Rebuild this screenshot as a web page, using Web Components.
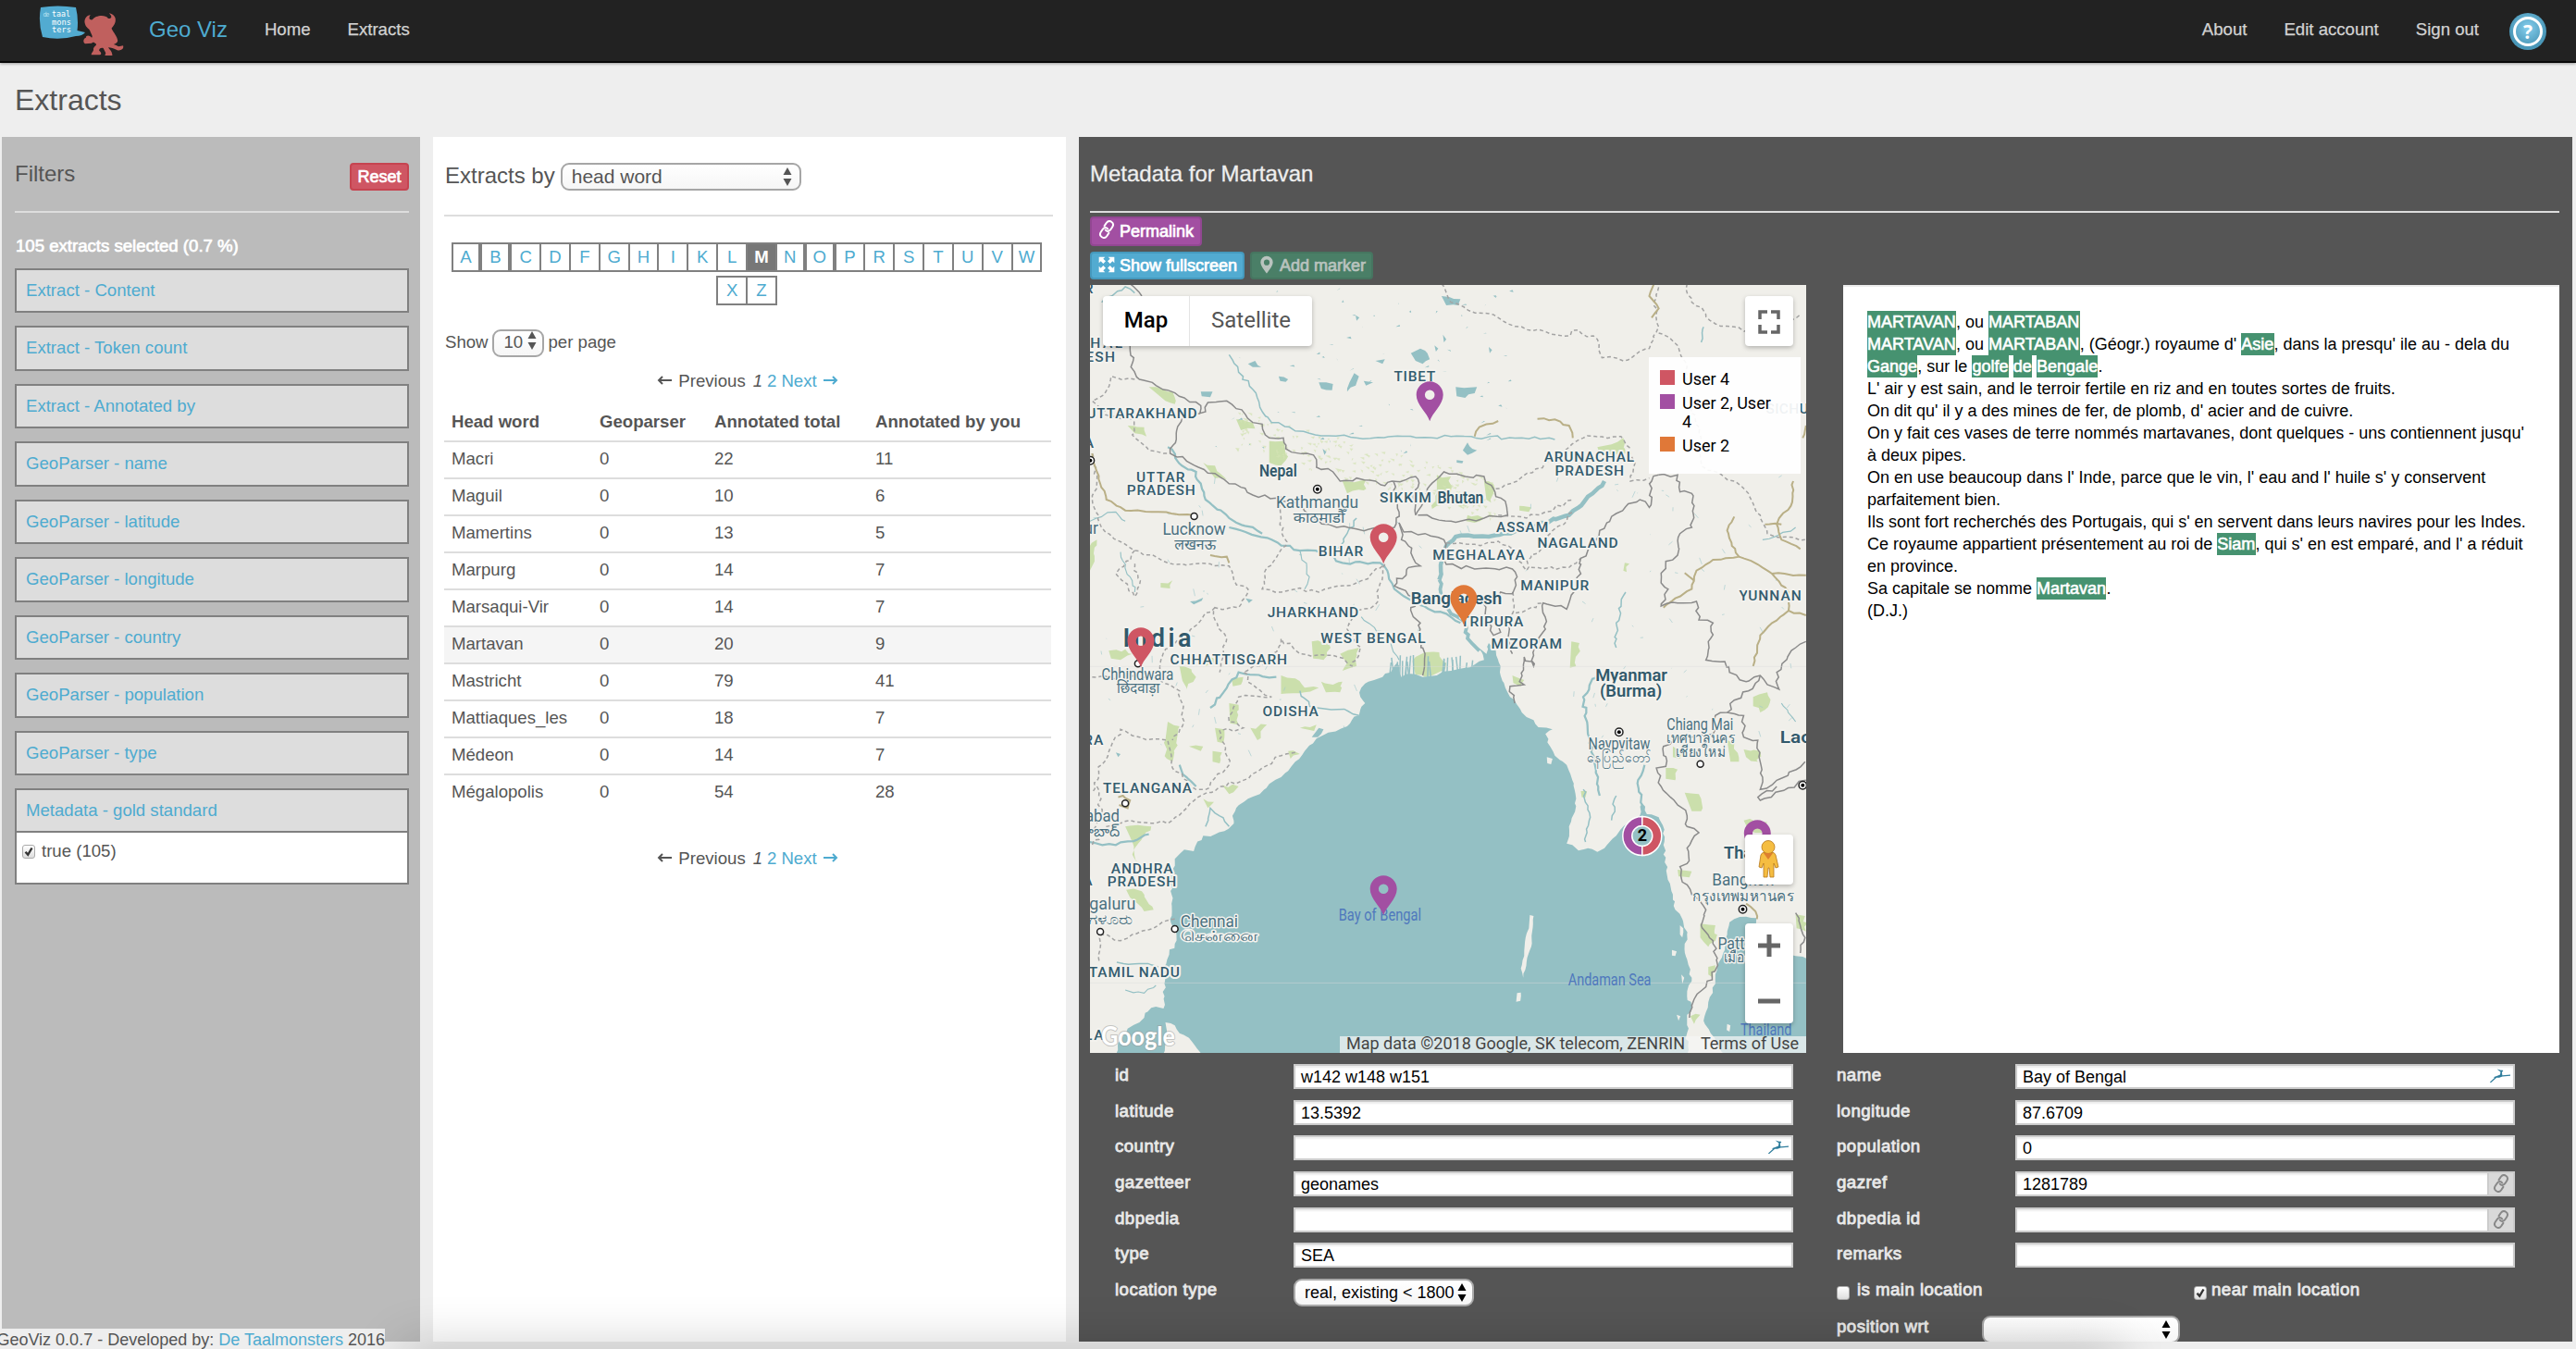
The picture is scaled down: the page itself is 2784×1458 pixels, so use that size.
<!DOCTYPE html>
<html lang="en">
<head>
<meta charset="utf-8">
<title>Geo Viz</title>
<style>
html,body{margin:0;padding:0}
body{width:2784px;height:1458px;overflow:hidden;background:#eee;color:#555;font:18.6px "Liberation Sans",Arial,sans-serif}
</style>
</head>
<body>
<geo-app></geo-app>
<script>
const RESET = `*{box-sizing:border-box} a{color:#4eabd0;text-decoration:none} .fat{-webkit-text-stroke:.7px currentColor}`;
function define(name, html, after) {
  const tpl = document.createElement('template');
  customElements.define(name, class extends HTMLElement {
    connectedCallback() {
      if (this.shadowRoot) return;
      tpl.innerHTML = `<style>${RESET}</style>` + (typeof html === 'function' ? html(this) : html);
      this.attachShadow({mode: 'open'}).appendChild(tpl.content.cloneNode(true));
      if (after) after(this);
    }
  });
}

/* ---------- small parts ---------- */
const ICONS = {
  link: `<g fill="none" stroke="currentColor" stroke-width="2.4" stroke-linecap="round" stroke-linejoin="round" transform="rotate(-4 12 12)"><path d="M10.500 12.500c1.500 2.500 4.500 2.500 6.300.4l2.700-3.400c2-2.600 1.600-5.200-.6-6.900-2.200-1.700-4.900-1.200-6.700 1l-2.700 3.600"/><path d="M13.500 11.500c-1.500-2.500-4.500-2.500-6.300-.4l-2.700 3.400c-2 2.600-1.600 5.200.6 6.900 2.200 1.700 4.900 1.200 6.700-1l2.700-3.600"/></g>`,
  expand: `<path fill="currentColor" d="M2 2h8L7.6 4.4l3.200 3.200-3.200 3.200-3.200-3.200L2 10zM22 2v8l-2.400-2.400-3.200 3.200-3.200-3.200 3.200-3.200L14 2zM2 22v-8l2.400 2.400 3.200-3.200 3.200 3.200-3.200 3.200L10 22zM22 22h-8l2.400-2.400-3.200-3.200 3.200-3.200 3.200 3.200L22 14z"/>`,
  pin: `<path fill="currentColor" fill-rule="evenodd" d="M12 1a8 8 0 0 0-8 8c0 5 8 14.500 8 14.500S20 14 20 9a8 8 0 0 0-8-8zm0 4.500a3.700 3.700 0 1 1 0 7.400 3.700 3.700 0 0 1 0-7.400z"/>`,
  bird: `<path fill="#2f7d9c" d="M9 2l4.500 2 1.500-.5 1 2-1.500 1 .5 5 9-.8v1.600l-9 1.200-3.500 1.500-3 .3L2 23l-1-1.200L6.500 15l-1.500-.5 5-2.500 2.500-1.500.5-4z"/>`
};
define('ui-icon', el => `<style>:host{display:inline-flex;flex:none;width:20px;height:20px}svg{width:100%;height:100%}</style>
<svg viewBox="0 0 24 24" preserveAspectRatio="none">${ICONS[el.getAttribute('name')]}</svg>`);

define('ui-button', `<style>
:host{display:inline-flex;align-items:center;height:30px;padding:0 7px 0 6px;gap:4px;border:2px solid;border-radius:4px;font-size:18px;color:#fff;line-height:26px;white-space:nowrap}
:host([kind=reset]){background:#cf5663;border-color:#c64450;width:64px;padding:0;justify-content:center;gap:0}
:host([kind=link]){background:#a24fa2;border-color:#924792;height:32px}
:host([kind=link]) ::slotted([slot=icon]){margin-bottom:5px}
:host([kind=full]){background:#52abd1;border-color:#4599bd}
:host([kind=full]) ::slotted([slot=icon]),:host([kind=add]) ::slotted([slot=icon]){margin-bottom:2px}
:host([kind=add]){background:#4a7f67;border-color:#467560;color:#b9c3be}
</style><slot name="icon"></slot><span class="fat"><slot></slot></span>`);

define('ui-select', el => `<style>
:host{display:inline-flex;align-items:center;justify-content:space-between;height:30px;border:2px solid #a6a6a6;border-radius:9px;background:linear-gradient(#fff,#f6f6f6);padding:0 8px 0 10px;line-height:26px;white-space:pre}
svg{width:10px;height:20px;flex:none}
</style><span><slot></slot></span><svg viewBox="0 0 10 20" fill="currentColor"><path d="M5 0l4.500 8h-9zM5 20l4.500-8h-9z"/></svg>`);

define('ui-check', el => `<style>
:host{display:inline-block;flex:none;width:14px;height:15px;border:1px solid #aaa;border-radius:3px;background:linear-gradient(#fff,#ddd)}
svg{display:block;width:12px;height:13px}</style>
${el.hasAttribute('checked') ? `<svg viewBox="0 0 12 13"><path d="M2.500 6.800l2.700 3 4.300-7.300" fill="none" stroke="#333" stroke-width="2.400"/></svg>` : ''}`);

define('ui-rule', `<style>:host{display:block;height:2px;background:#ddd;flex:none}</style>`);

/* ---------- navigation bar ---------- */
define('nav-bar', `<style>
:host{display:flex;height:68px;background:#222;border-bottom:2px solid #080808;box-shadow:0 1px 3px rgba(0,0,0,.35);padding:0 32px 0 42px;line-height:64px;color:#d2d2d2;position:relative}
.logo{width:94px;height:56px;margin:6px -2px 0 0}
.brand{font-size:24px;color:#4eabd0;margin-left:27px}
span{margin-left:40px;-webkit-text-stroke:.25px}
.sp{flex:1}
.help{width:40px;height:40px;margin:14px 0 0 33px}
</style>
<svg class="logo" viewBox="0 0 94 56"><path d="M2 2Q20-1 40 2Q43 14 41.500 27L50 29Q47 33 40 33Q22 38 4 34Q-1 18 2 2z" fill="#52abd1"/>
<g fill="#fff" font-family="DejaVu Sans Mono" font-size="9.500"><text x="4.500" y="11.500" font-size="7" fill="#b5e0f0" textLength="7">de</text><text x="14" y="11.500" textLength="20" lengthAdjust="spacingAndGlyphs">taal</text><text x="14" y="20.500" textLength="21" lengthAdjust="spacingAndGlyphs">mons</text><text x="14" y="29" textLength="21" lengthAdjust="spacingAndGlyphs">ters</text></g>
<path transform="translate(-42 -6) scale(.4464 .3333)" fill="#c0605e" d="M206 78C202 62 210 50 219 48C214 58 216 66 224 64C230 50 255 46 262 60C270 62 273 54 264 43C276 46 282 58 279 72C277 82 272 88 270 92C276 108 284 118 285 132C284 140 278 142 275 144C282 146 286 152 290 150L298 148C301 158 292 166 284 163C276 158 268 154 262 154C266 162 272 168 272 180L254 180L256 172L250 156C244 154 240 158 240 164C246 170 246 176 242 178L221 178C221 170 228 166 226 158C228 150 236 146 232 142C228 136 224 136 222 140L206 142C200 136 202 124 208 122C208 114 216 112 222 122C226 118 220 110 218 100C216 92 208 90 206 78z"/></svg>
<a class="brand">Geo Viz</a><span>Home</span><span>Extracts</span><div class="sp"></div><span>About</span><span>Edit account</span><span>Sign out</span>
<svg class="help" viewBox="0 0 40 40"><defs><radialGradient id="g" cx=".5" cy=".4"><stop offset="0" stop-color="#86cfee"/><stop offset="1" stop-color="#4a97b8"/></radialGradient></defs><circle cx="20" cy="20" r="20" fill="url(#g)"/><circle cx="20" cy="20" r="14.500" fill="none" stroke="#fff" stroke-width="3"/><text x="20" y="27.500" text-anchor="middle" font-family="Open Sans" font-weight="700" font-size="21" fill="#fff">?</text></svg>`);

/* ---------- filters ---------- */
define('filter-item', `<style>
:host{display:block;border:2px solid #808080;flex:none}
.h{background:#ddd;height:44.450px;line-height:43.400px;padding-left:10px;color:#4eabd0}
::slotted([slot=body]){display:flex;height:56px;border-top:2px solid #808080;background:#fff;line-height:39px;padding-left:6px;gap:7px}
</style><div class="h"><slot></slot></div><slot name="body"></slot>`);
define('filter-panel', `<style>
:host{display:flex;flex-direction:column;width:452px;background:#bbb;padding:0 12px 0 14px}
header{display:flex;justify-content:space-between;height:80px;font-size:24px;line-height:80px}
ui-button{margin-top:28px}
.n{color:#fff;height:60px;padding:12px 0 0 1px;line-height:47px}
.l{display:flex;flex-direction:column;gap:14px}
ui-check{margin-top:13px}
</style><header>Filters<ui-button kind="reset">Reset</ui-button></header><ui-rule></ui-rule>
<div class="n fat">105 extracts selected (0.7 %)</div><div class="l">
${['Extract - Content','Extract - Token count','Extract - Annotated by','GeoParser - name','GeoParser - latitude','GeoParser - longitude','GeoParser - country','GeoParser - population','GeoParser - type'].map(t=>`<filter-item>${t}</filter-item>`).join('')}
<filter-item>Metadata - gold standard<div slot="body"><ui-check checked></ui-check>true (105)</div></filter-item></div>`);

/* ---------- extract list ---------- */
define('page-nav', `<style>:host{display:flex;justify-content:center;line-height:25px;height:24px}
i,a{margin-left:5px}i{margin-left:8px}svg{width:17px;height:12px}span{display:flex;align-items:center;gap:6px}a{display:flex;align-items:center;gap:6px}</style>
<span><svg viewBox="0 0 17 12"><path d="M16 6H2M6 2L2 6l4 4" fill="none" stroke="#555" stroke-width="2"/></svg>Previous</span><i>1</i><a>2</a><a>Next<svg viewBox="0 0 17 12"><path d="M1 6h14M11 2l4 4-4 4" fill="none" stroke="#4eabd0" stroke-width="2"/></svg></a>`);
define('letter-index', `<style>
:host{display:flex;flex-direction:column;align-items:center;gap:4px}
div{display:flex;padding-right:6px}
a{width:33.850px;margin-right:-2px;height:32px;border:2px solid #808080;text-align:center;line-height:27px}
a.t{width:31.850px;margin-right:0}
a.on{background:#777;color:#fff;font-weight:bold}
</style><div>${[...'ABCDFGHIKLMNOPRSTUVW'].map(c=>`<a class="${'ABNO'.includes(c)?'t':''} ${c==='M'?'on':''}">${c}</a>`).join('')}</div><div><a>X</a><a>Z</a></div>`);
define('extract-panel', `<style>
:host{display:flex;flex-direction:column;width:684px;background:#fff;padding:0 14px 0 12px}
header{display:flex;height:84px;font-size:24px;line-height:84px;padding-left:1px}
header ui-select{width:260px;margin:28px 0 0 6px;font-size:21px}
letter-index{margin-top:28px}
.show{display:flex;margin-top:26px;height:30px;line-height:28px;padding-left:1px}
.show ui-select{width:56px;margin:0 5px 0 4px;padding:0 6px 0 11px;line-height:24px;align-items:flex-start}
page-nav{margin-top:13px;margin-right:2px}
.t{display:grid;width:656px;margin:13px 0 26px}
.r{display:grid;grid-template-columns:160px 124px 174px 190px;height:40px;border-top:2px solid #ddd;line-height:35px;padding-left:8px}
.r.h{border-color:transparent;font-weight:bold}.r.on{background:#f5f5f5}
.r span{white-space:nowrap}
</style><header>Extracts by<ui-select>head word</ui-select></header><ui-rule></ui-rule>
<letter-index></letter-index>
<div class="show">Show<ui-select>10</ui-select>per page</div><page-nav></page-nav>
<div class="t">${[['Head word','Geoparser','Annotated total','Annotated by you'],['Macri',0,22,11],['Maguil',0,10,6],['Mamertins',0,13,5],['Marpurg',0,14,7],['Marsaqui-Vir',0,14,7],['Martavan',0,20,9],['Mastricht',0,79,41],['Mattiaques_les',0,18,7],['Médeon',0,14,7],['Mégalopolis',0,54,28]].map((r,i)=>`<div class="r ${i?'':'h'} ${r[0]==='Martavan'?'on':''}">${r.map(c=>`<span>${c}</span>`).join('')}</div>`).join('')}</div>
<page-nav></page-nav>`);

/* ---------- map ---------- */
/* Terrain is plotted on its own grid and scaled to the view by one transform. */
let seed = 7;
const rnd = () => (seed = (seed * 16807) % 2147483647) / 2147483647;
function rough(str, amp = 5) {
  const p = str.trim().split(/\s+/).map(s => s.split(',').map(Number));
  let out = 'M' + p[0];
  for (let i = 1; i < p.length; i++) {
    const [a, b] = [p[i-1], p[i]], n = Math.max(1, Math.round(Math.hypot(b[0]-a[0], b[1]-a[1]) / 14));
    for (let k = 1; k < n; k++) out += `L${(a[0]+(b[0]-a[0])*k/n+(rnd()-.5)*amp).toFixed(1)} ${(a[1]+(b[1]-a[1])*k/n+(rnd()-.5)*amp*1.5).toFixed(1)}`;
    out += 'L' + b;
  }
  return out;
}
const SEA = `655,575 625,590 610,610 608,640 618,660 608,680 605,700 590,715 580,735 540,755 515,775 490,815 470,850 455,880 440,900 415,922 395,955 370,970 345,1000 337,1025 340,1050 320,1075 300,1085 275,1090 258,1125 255,1140 235,1135 215,1165 207,1230 208,1310 205,1360 217,1395 215,1440 203,1475 190,1515 193,1570 191,1650 165,1648 150,1680 140,1695 115,1715 95,1760 90,1800 1300,1800 1300,1690 1310,1645 1300,1610 1310,1550 1300,1490 1295,1440 1300,1410 1290,1360 1275,1330 1270,1280 1258,1220 1255,1160 1250,1120 1252,1070 1240,1030 1215,1020 1205,985 1200,1025 1165,1060 1150,1090 1125,1130 1110,1142 1090,1130 1070,1138 1057,1120 1045,1115 1050,1060 1060,1020 1065,970 1060,920 1050,880 1045,860 1020,830 1010,800 1000,760 1015,745 985,738 975,715 960,705 950,690 940,665 925,640 915,610 905,570 905,540 895,490 880,465 875,500 858,480 870,520 850,535 830,545 815,550 800,555 770,570 740,575 715,565 695,575 685,530 672,560 655,575`;
const GULF = `1390,1370 1400,1360 1425,1352 1447,1357 1450,1400 1455,1440 1480,1475 1510,1470 1530,1480 1556,1490 1556,1800 1380,1800 1350,1730 1335,1690 1345,1630 1360,1570 1365,1510 1380,1460 1385,1410 1390,1370`;
const BORDERS = [
 `120,-500 128,-460 122,-430 140,-390 175,-370 200,-355 235,-330 270,-305 268,-280 280,-285 285,-315 325,-320 345,-295 365,-275 380,-250 400,-245 415,-200 445,-200 450,-165 495,-150 515,-130 515,-105 550,-90 565,-60 600,-70 640,-60 660,-45 675,-60 705,-65 725,-75 730,-40 720,0 725,50`,
 `268,-280 230,-265 218,-215 205,-150 240,-125 265,-105 300,-85 320,-65 355,-40 380,-15 430,-5 470,10 500,50 540,80 600,95 650,95 680,90 690,40 680,0 678,-60`,
 `725,50 755,-45 785,-90 830,-75 870,-75 890,-35 895,-10 915,5 920,50 870,60 800,70 760,60 730,50`,
 `690,75 700,105 745,110 785,130 790,210 850,225 930,225 940,250 930,305 905,300 890,330 870,340 880,400 890,440 905,430 900,410 910,380 920,400 925,470 930,500`,
 `690,75 695,130 710,150 720,190 735,215 710,220 705,245 685,255 680,280 710,310 730,330 715,350 720,380 735,400 730,450 745,500 740,570`,
 `1240,-80 1225,-60 1220,25 1200,0 1150,45 1130,75 1115,100 1105,140 1075,190 1075,240 1060,300 1045,355 995,335 1000,420 985,450 975,505 975,540 955,510 945,590 955,600 925,605 935,660`,
 `1240,-80 1280,-80 1285,-25 1310,-20 1315,20 1310,90 1285,110 1280,180 1255,200 1245,270 1260,290 1245,345 1280,335 1320,330 1325,390 1355,400 1350,450 1340,520 1380,525 1390,560 1425,590 1455,570 1470,600 1495,615 1490,560 1530,480 1552,460`,
 `1455,570 1430,620 1400,650 1385,690 1360,700 1355,760 1310,770 1290,775 1250,800 1255,865 1235,870 1245,930 1265,965 1290,1000 1300,1025 1300,1060 1325,1080 1310,1105 1300,1130 1300,1180 1285,1190 1290,1240 1310,1280 1340,1330 1330,1380 1355,1430 1365,1510 1340,1580 1315,1620 1305,1680`,
 `1385,690 1420,700 1420,770 1450,780 1455,850 1460,900 1455,940 1490,910 1550,850`,
 `1490,930 1450,965 1455,975 1552,910`, `120,-700 128,-690 145,-660`, `1530,1340 1550,1420 1540,1470`];
const DASHED = [
 `780,-700 800,-640 860,-605 900,-590 950,-560 1000,-545 1040,-530 1070,-550 1110,-520 1120,-460 1165,-450 1220,-490 1240,-560 1230,-640 1240,-690`,
 `1300,-700 1310,-640 1360,-570 1400,-560 1450,-545 1500,-560 1540,-600`,`1240,-540 1280,-500 1300,-430 1310,-300 1330,-200 1330,-110 1400,-60 1430,-20 1455,50 1470,110 1550,130`,
 `130,-390 80,-400 65,-340 40,-320 80,-270 130,-260 125,-210 160,-160 200,-150`,
 `40,-150 50,-60 40,0 60,90 130,165 200,205 330,215 340,260 370,290 350,350 300,350 300,390 325,450 310,560`,
 `130,165 90,240 130,315 140,280 130,200`,`440,-10 440,60 450,150 410,220 400,290 440,300 470,290 520,300 600,270 660,210`,
 `660,210 640,340 600,360 580,420 610,480 590,540 560,510 480,500 440,450 420,520 360,560 380,600 420,640 350,640 330,720 360,740 310,750 330,860 280,940 260,940 210,870 200,780 140,770 100,745 60,860 40,950`,
 `40,575 180,580 225,620 235,720 210,780`,`300,350 190,500 180,580`,`470,820 440,830 400,870 360,910 310,930 270,960`,`270,960 240,1000 200,1050 120,1040 70,1060 40,1120`,
 `50,930 60,1020 40,1080`,`215,1360 170,1390 100,1430 60,1410 55,1500`,
 `895,-35 940,-60 980,-100 1050,-170 1080,-200 1160,-205 1190,-120 1180,-60 1220,-70`,
 `790,140 850,145 900,135 930,160 960,230 970,180 1000,150 1010,110 1060,40`,`970,220 1050,220 1075,190`,`930,300 930,370 980,350 995,335`,`900,50 960,60 1000,40 1060,0`];
const ROADS = [`40,-150 50,-90 70,0 110,35 180,40 255,50`,`290,180 325,185 330,205`,`1400,55 1385,100 1395,150 1410,185 1355,195 1340,210 1320,230 1315,250 1310,290 1275,320 1250,350`,`1295,238 1315,262`,
 `1410,185 1450,210 1480,240 1552,245`,`1525,-60 1520,20 1495,60 1490,80 1500,130 1540,160`,`1480,240 1515,300 1515,360 1552,375`,`1515,360 1480,400 1455,440 1440,540`,
 `1230,-700 1220,-660 1240,-620 1225,-590`,`850,-205 860,-235 900,-255`,`983,-262 1020,-260 1050,-240 1058,-200`,`1425,1310 1445,1335 1448,1360`,`1552,-240 1545,-200`,`1465,80 1500,80`,`95,965 105,960 120,975 115,1000 97,990`];
const RIVERS = [
 [`1125,-60 1100,-20 1050,50 990,75 940,100 880,120 810,120 790,150 780,200 775,260`,6],[`775,260 780,320 800,370 830,400 835,450 860,490`,5],
 [`330,90 420,130 480,165 540,175 570,205 650,205 665,230 680,290 730,340 790,370 820,400`,3],[`200,-170 230,-110 260,-90 280,0 330,60 400,110`,3],[`600,60 580,110 560,170`,2],
 [`290,675 325,610 350,560 430,575`,3],[`480,620 500,670 560,680 605,700`,2],[`1170,300 1150,400 1150,480`,2],[`1110,560 1080,640 1090,760 1105,860 1115,960`,3],[`1205,990 1195,920 1210,860`,3],[`225,860 240,900 260,930`,3],
 [`35,1110 90,1120 160,1085`,3],[`330,-470 420,-250 500,-215 600,-200`,2],[`600,-200 800,-205 950,-200 1020,-195`,2],[`280,1060 290,1000 330,1060`,2],[`92,1500 130,1505 180,1515`,2],[`110,1590 150,1600 175,1575`,1.5],
 [`35,70 90,40 110,70`,1.5],[`100,170 120,250 130,300`,1.5],[`60,-640 110,-690 130,-670`,2],[`480,165 500,250 490,290`,1.5],[`610,380 660,440 690,520`,1.5],[`1330,-510 1335,-560`,2],[`1500,660 1530,720`,1.5],[`1080,940 1095,1030 1085,1110`,2],[`1150,960 1140,1040`,2],[`1460,130 1530,90`,1.5]];
const LAKES = [`715,-475 735,-490 750,-475 755,-455 740,-440 725,-450`,`640,-450 660,-455 655,-440`,`520,-380 550,-375 548,-355 525,-360`,`595,-410 605,-400 598,-370 580,-350 585,-380`,`615,-385 635,-380 620,-370`,`810,-365 855,-365 850,-345 830,-330 812,-335`,`270,-350 295,-350 290,-332 272,-335`,`370,-440 385,-450 398,-430 380,-430`,`435,-400 455,-390 450,-382 438,-385`,`780,-660 820,-650 815,-630 790,-630`,`835,-185 845,-165 855,-160 835,-145 825,-160`,`812,-128 826,-125 824,-118 812,-120`,`247,330 275,318 272,328 255,340`,`365,320 380,325 372,335`,`505,770 520,740 530,745 518,770`,`598,-598 606,-590 600,-580`,`880,-495 887,-485 882,-475`,`783,-535 790,-520 785,-510`,`765,-500 773,-490 768,-480`,`528,-165 536,-155 532,-145`,`90,820 100,825 95,835`];
const PARKS = [`75,490 110,485 125,500 100,520 80,515`,`185,270 210,262 205,288 185,285`,`115,-240 150,-235 155,-205 130,-215`,`225,540 250,550 260,575 240,615 230,580`,`265,515 290,510 300,530 280,540`,`505,460 540,465 545,480 530,520 508,515`,`565,500 605,480 600,540 570,555 580,530`,`440,570 470,580 490,610 520,610 490,625 440,630`,`525,590 550,600 570,590 565,625 535,625`,`330,660 350,665 350,730 332,725`,`335,580 360,575 355,600 338,605`,`200,720 225,735 220,770 210,850 198,840 195,780`,`245,800 275,800 270,815`,`295,815 315,820 310,855 295,850`,`300,740 320,745 318,790 305,785`,`720,540 725,510 745,495 775,495 790,530 788,550 760,570 725,568`,`1055,460 1072,465 1065,540 1052,545`,`930,570 955,585 948,605 932,595`,`275,-120 300,-110 325,-65 300,-70`,`415,-190 445,-190 455,-140 440,-110 415,-120`,`345,-260 380,-250 385,-230 355,-225`,`160,-365 210,-350 215,-310 195,-320`,`570,-60 620,-65 615,-30 580,-20`,`770,-80 800,-75 795,0 760,30 770,-20`,`870,-60 890,-50 885,10 875,0`,`1110,-170 1165,-200 1170,-150 1120,-130`,`1440,640 1470,625 1475,660 1455,690 1440,670`,`1385,780 1400,790 1410,850 1392,850`,`1420,810 1455,815 1450,850 1425,835`,`1270,800 1290,810 1285,840 1270,835`,`1255,870 1280,875 1275,910 1255,905`,`1295,950 1325,955 1330,1010 1310,1010`,`1420,1040 1470,1045 1460,1080 1430,1070`,`1328,1375 1360,1380 1360,1430 1345,1450 1328,1420`,`1345,1515 1360,1510 1355,1550 1345,1540`,`1307,1675 1328,1670 1315,1700`,`110,1060 165,1060 130,1130 128,1160 150,1190 135,1190 125,1110`,`112,1265 145,1270 170,1330 150,1335 120,1290`,`275,970 298,980 285,1000`,`315,925 350,930 330,955`,`455,815 480,825 460,840`,`480,740 515,730 510,750`,`375,740 410,730 390,780`,`35,150 50,130 45,200 35,230`,`1168,205 1178,208 1172,235 1165,230`,`945,20 970,25 965,40 945,35`,`835,50 870,60 850,75 832,70`,`1280,1200 1310,1205 1305,1225 1282,1222`,`1530,1345 1550,1350 1552,1400 1532,1390`,`1075,945 1088,945 1085,965 1077,965`];
const LAND = [`967,1347 975,1350 972,1400 970,1450 960,1500 953,1550 948,1520 955,1480 958,1420 965,1390`,`940,1600 948,1598 947,1625 938,1628`,`195,1695 215,1705 225,1730 245,1745 262,1780 272,1800 190,1800 200,1740`,`1003,835 1015,840 1012,858 1004,855`,`1268,1460 1278,1465 1275,1480 1268,1478`,`1285,1380 1292,1390 1290,1420 1285,1410`,`1385,1700 1392,1705 1390,1725 1384,1720`,`1288,1540 1294,1550 1290,1570`,`1278,1670 1286,1675 1282,1690`,`1545,1440 1552,1445 1552,1475 1545,1470`];

/* [left, right, baseline, text, class] on the terrain grid */
const LABELS = [
 [679,767,-383,'TIBET','s'],[28,262,-263,'UTTARAKHAND','s'],[133,236,-57,'UTTAR','s'],[113,258,-14,'PRADESH','s'],[394,474,-74,'Nepal','c'],[429,604,28,'Kathmandu','t'],[466,575,76,'काठमाडौँ','t'],
 [649,758,9,'SIKKIM','s'],[771,869,12,'Bhutan','c'],[997,1188,-122,'ARUNACHAL','s'],[1020,1166,-79,'PRADESH','s'],[-62,88,-447,'PRADESH','s'],[-85,104,-493,'HIMACHAL','s'],[1467,1600,-280,'SICHUAN','s'],[-120,43,-167,'HARYANA','s'],[-110,42,-670,'KASHMIR','s'],
 [189,323,114,'Lucknow','t'],[214,302,162,'लखनऊ','t'],[-44,53,110,'Jaipur','t'],[519,614,183,'BIHAR','s'],[761,956,195,'MEGHALAYA','s'],[896,1006,104,'ASSAM','s'],[983,1154,155,'NAGALAND','s'],[947,1092,294,'MANIPUR','s'],
 [715,908,339,'Bangladesh','c'],[820,953,410,'TRIPURA','s'],[885,1035,484,'MIZORAM','s'],[1410,1542,327,'YUNNAN','s'],[411,604,382,'JHARKHAND','s'],[524,746,464,'WEST BENGAL','s'],[105,250,476,'India','b'],
 [205,453,534,'CHHATTISGARH','s'],[60,212,585,'Chhindwara','t'],[92,183,628,'छिंदवाड़ा','t'],[401,519,702,'ODISHA','s'],[-180,63,794,'MAHARASHTRA','s'],[63,251,952,'TELANGANA','s'],
 [1106,1258,588,'Myanmar','c'],[1115,1247,640,'(Burma)','c'],[1257,1398,748,'Chiang Mai','t'],[1257,1402,790,'เทศบาลนคร','t'],[1276,1382,834,'เชียงใหม่','t'],[1091,1222,809,'Naypyitaw','t'],[1088,1224,852,'နေပြည်တော်','t'],[1497,1585,788,'Laos','c'],
 [-60,98,1045,'Hyderabad','t'],[-40,98,1092,'హైదరాబాద్','t'],[80,211,1211,'ANDHRA','s'],[72,218,1255,'PRADESH','s'],[-165,40,1250,'KARNATAKA','s'],[-26,132,1330,'Bengaluru','t'],[-14,126,1377,'ಬೆಂಗಳೂರು','t'],[227,349,1386,'Chennai','t'],[227,392,1432,'சென்னை','t'],[33,225,1548,'TAMIL NADU','s'],[-65,64,1751,'KERALA','s'],
 [562,737,1364,'Bay of Bengal','w'],[1048,1224,1574,'Andaman Sea','w'],[1413,1522,1738,'Thailand','w'],[1378,1516,1163,'Thailand','c'],[1353,1483,1252,'Bangkok','t'],[1312,1527,1302,'กรุงเทพมหานคร','t'],[1365,1470,1457,'Pattaya','t'],[1378,1500,1500,'เมืองพัทยา','t']];
const SIZE = {s:15.5, c:19, t:18, b:27, w:17.5};
const DOTS = [[517,-34,1],[256,54,0],[137,532,0],[1156,754,1],[1328,857,0],[1545,926,1],[110,985,0],[57,1401,0],[215,1392,0],[1418,1328,1],[36,-127,1]];
const PINS = [[755,-383,'#a24fa2'],[657,79,'#cf5663'],[143,415,'#cf5663'],[827,277,'#e07838'],[657,1219,'#a24fa2'],[1449,1039,'#a24fa2']];
const X = x => +(x/1.96-18).toFixed(1), Y = y => +(y/3+232).toFixed(1);

define('geo-map', () => {
  const paths = (list, attr, amp) => list.map(s => `<path d="${rough(s, amp)}" ${attr}/>`).join('');
  let flecks = '';
  for (let i = 0; i < 70; i++) { const x = 300+rnd()*650, y = -690+rnd()*560; flecks += `<path d="M${x} ${y}l${rnd()*9} ${3-rnd()*12} ${rnd()*3} ${rnd()*8}z" fill="#94c0c4"/>`; }
  for (let i = 0; i < 230; i++) { const x = 340+rnd()*560, y = -230+(x-340)*.42+(rnd()-.5)*130; flecks += `<path d="M${x} ${y}l${3+rnd()*8} ${rnd()*8-4} ${-rnd()*5} 8z" fill="#d3e2b4" opacity=".7"/>`; }
  for (let i = 0; i < 130; i++) { const x = 40+rnd()*1500, y = -100+rnd()*950; if (x>600&&x<1060&&y>440) continue; flecks += `<path d="M${x} ${y}l${rnd()*16-8} ${rnd()*34-10}" stroke="#9fcacd" fill="none" stroke-width="1" vector-effect="non-scaling-stroke" opacity=".6"/>`; }
  for (let i = 0; i < 22; i++) { const x = 660+rnd()*210; flecks += `<path d="M${x} 575L${x+rnd()*10-5} ${500+rnd()*30}" stroke="#94c0c4" stroke-width="1.5" fill="none" vector-effect="non-scaling-stroke"/>`; }
  const ve = 'vector-effect="non-scaling-stroke" fill="none"';
  return `<style>
:host{display:block;position:relative;width:774px;height:830px;overflow:hidden;background:#f0efea;font-family:Roboto,sans-serif}
:host>svg{position:absolute;left:0;top:0;width:774px;height:830px}
.lb{fill:#31596b;stroke:#f3f2ee;stroke-width:4px;paint-order:stroke;stroke-linejoin:round;font-family:Roboto,"Noto Sans","Liberation Sans",sans-serif}
.s{font-weight:500;fill:#335c6e}.c,.b{font-weight:600}.t{fill:#4a7181;stroke-width:3px}.w{fill:#4f78bd;stroke:none}
.box{position:absolute;background:#fff;border-radius:4px;box-shadow:0 2px 5px rgba(0,0,0,.25)}
.type{left:14px;top:12px;height:54px;display:flex;font-size:24px;line-height:52px;color:#565656}
.type b{width:94px;text-align:center;color:#000;font-weight:500;border-right:1px solid #e4e4e4}.type span{width:132px;text-align:center}
.fs,.sv,.zm{left:708px;width:52px}.fs{top:12px;height:54px}.sv{top:594px;height:54px}.zm{top:690px;height:108px}
.box svg{display:block;width:52px}
.lg{position:absolute;left:604px;top:78px;width:164px;height:126px;background:rgba(255,255,255,.92);padding:13.5px 12px;display:flex;flex-direction:column;gap:6px;color:#000;font-size:18px;line-height:20px}
.lg div{display:flex;gap:8px}.lg i{width:16px;height:16px;flex:none}
.at{position:absolute;right:0;bottom:0;width:504px;height:18px;background:rgba(245,245,245,.72)}
.at svg{display:block}
</style>
<svg viewBox="0 0 774 830"><g transform="translate(-18 232) scale(.510204 .333333)">
${paths(PARKS,'fill="#cbdfac"',9)}${flecks}
<path d="${rough(SEA,7)}z" fill="#94c0c4"/><path d="${rough(GULF,5)}z" fill="#94c0c4"/>
${paths(LAND,'fill="#f0efea"',3)}
${RIVERS.map(([s,w])=>`<path d="${rough(s,8)}" ${ve} stroke="#94c0c4" stroke-width="${w*.75}"/>`).join('')}
${paths(LAKES,'fill="#94c0c4"',6)}
${paths(DASHED,ve+' stroke="#a3a3a3" stroke-width="1.5" stroke-dasharray="4 3"',9)}
${paths(ROADS,ve+' stroke="#b9af86" stroke-width="2"',5)}
${paths(BORDERS,ve+' stroke="#8b8b8b" stroke-width="1.5"',9)}
<path d="M35 1567H1552M35 541H1552" ${ve} stroke="#ddd" opacity=".45"/>
</g>
${DOTS.map(([x,y,k])=>`<circle cx="${X(x)}" cy="${Y(y)}" r="${k?4.2:3.5}" fill="#fff" stroke="#222" stroke-width="1.5"/>${k?`<circle cx="${X(x)}" cy="${Y(y)}" r="2" fill="#000"/>`:''}`).join('')}
${LABELS.map(([a,b,y,t,c])=>`<text class="lb ${c}" x="${X(a)}" y="${Y(y)}" font-size="${/[^\x00-\x7f]/.test(t)?16:SIZE[c]}" textLength="${((b-a)/1.96).toFixed(1)}" lengthAdjust="${'sb'.includes(c)?'spacing':'spacingAndGlyphs'}">${t}</text>`).join('')}
${PINS.map(([x,y,c])=>`<path transform="translate(${X(x)-14.5} ${Y(y)})" fill="${c}" fill-rule="evenodd" d="M14.500 0C6.500 0 0 6.500 0 14.500C0 25.500 12 34 14.500 43C17 34 29 25.500 29 14.500C29 6.500 22.500 0 14.500 0zM14.500 9.200a5.300 5.300 0 1 1 0 10.600a5.300 5.300 0 1 1 0-10.600z"/>`).join('')}
<g transform="translate(596.8 595.5)"><path d="M0-21A21 21 0 0 0 0 21V11A11 11 0 0 1 0-11z" fill="#a24fa2" stroke="#fff" stroke-width="1.5"/><path d="M0-21A21 21 0 0 1 0 21V11A11 11 0 0 0 0-11z" fill="#cf5663" stroke="#fff" stroke-width="1.5"/><text x="0" y="5" text-anchor="middle" font-size="18" font-weight="700" font-family="Roboto">2</text></g>
<text x="12" y="822" font-family="Lato" font-weight="700" font-size="28" fill="#fff" stroke="#999" stroke-opacity=".5" stroke-width="2" paint-order="stroke" textLength="80" lengthAdjust="spacingAndGlyphs">Google</text>
</svg>
<div class="lg"><div><i style="background:#cf5663"></i>User 4</div><div><i style="background:#a24fa2"></i>User 2, User<br>4</div><div><i style="background:#e07838"></i>User 2</div></div>
<div class="box type"><b>Map</b><span>Satellite</span></div>
<div class="box fs"><svg viewBox="0 0 52 54" height="54"><path d="M16 26v-8h8M28 18h8v8M36 32v8h-8M24 40h-8v-8" transform="translate(0 -1)" fill="none" stroke="#666" stroke-width="3.5"/></svg></div>
<div class="box sv"><svg viewBox="0 0 52 54" height="54"><g fill="#f5bd41" stroke="#b5761b" stroke-width=".8"><path d="M17 22q1-3 5-3h6q4 0 5 3l3 13-3 1-2-5v15h-4l-1-10h-1l-1 10h-4V31l-2 5-3-1z"/><circle cx="25" cy="13.500" r="7"/></g><path d="M20 20h10l-5 7z" fill="#dd7f2e"/></svg></div>
<div class="box zm"><svg viewBox="0 0 52 108" height="108"><path d="M14 24h24M26 12v24M14 84h24" stroke="#666" stroke-width="5"/></svg></div>
<div class="at"><svg width="504" height="18" font-size="18" fill="#444"><text x="7" y="14" textLength="366">Map data ©2018 Google, SK telecom, ZENRIN</text><text x="390" y="14" textLength="106">Terms of Use</text></svg></div>`;
});

/* ---------- document text ---------- */
define('doc-view', `<style>
:host{display:block;width:774px;height:830px;background:#fff;border-top:2px solid #ececec;padding:26px;font-size:18px;line-height:24px;color:#000;white-space:nowrap}
b{display:inline-block;font-weight:400;background:#469270;color:#fff;-webkit-text-stroke:.6px #fff;height:24px;vertical-align:top;padding-right:.3px}
</style><b>MARTAVAN</b>, ou <b>MARTABAN</b><br><b>MARTAVAN</b>, ou <b>MARTABAN</b>, (Géogr.) royaume d' <b>Asie</b>, dans la presqu' ile au - dela du<br><b>Gange</b>, sur le <b>golfe</b> <b>de</b> <b>Bengale</b>.<br>L' air y est sain, and le terroir fertile en riz and en toutes sortes de fruits.<br>On dit qu' il y a des mines de fer, de plomb, d' acier and de cuivre.<br>On y fait ces vases de terre nommés martavanes, dont quelques - uns contiennent jusqu'<br>à deux pipes.<br>On en use beaucoup dans l' Inde, parce que le vin, l' eau and l' huile s' y conservent<br>parfaitement bien.<br>Ils sont fort recherchés des Portugais, qui s' en servent dans leurs navires pour les Indes.<br>Ce royaume appartient présentement au roi de <b>Siam</b>, qui s' en est emparé, and l' a réduit<br>en province.<br>Sa capitale se nomme <b>Martavan</b>.<br>(D.J.)`);

/* ---------- metadata form ---------- */
define('form-row', el => `<style>
:host{display:flex;height:38.670px;align-items:flex-start}
label{width:193px;line-height:24px;color:#e9e9e9;font-size:18.670px;letter-spacing:.45px;-webkit-text-stroke:.8px}
.in{display:flex;justify-content:space-between;width:540px;height:27px;background:#fff;border:2px solid #ccc;box-shadow:inset 0 2px 2px #eee;color:#000;font-size:18px;line-height:25px;padding-left:6px}
ui-icon{width:23px;height:17px;margin:2px 3px 0 0}
.add{width:30px;margin:-2px -2px -2px 0;background:#d9d9d9;border:2px solid #ccc;color:#888;display:flex;justify-content:center}
.add ui-icon{width:20px;height:20px;margin:1px 0 0}
</style><label>${el.getAttribute('label')}</label><div class="in"><span>${el.getAttribute('value')||''}</span>${el.hasAttribute('bird')?'<ui-icon name="bird"></ui-icon>':''}${el.hasAttribute('linked')?'<div class="add"><ui-icon name="link"></ui-icon></div>':''}</div>`);

define('meta-panel', `<style>
:host{display:flex;flex-direction:column;width:1614px;background:#555;padding:0 14px 0 12px;overflow:hidden}
header{height:80px;line-height:80px;font-size:24px;color:#eee;flex:none;-webkit-text-stroke:.3px}
.b1,.b2{display:flex;flex:none}.b1{margin-top:4px}.b2{margin:6px 0;gap:6px}
.b2 ui-button{padding-right:6px}
.view{display:flex;gap:40px;flex:none}
.form{display:flex;gap:46px;padding:12px 0 0 27px;flex:none}
.col{display:flex;flex-direction:column;width:734px}
.lab{color:#e9e9e9;font-size:18.670px;line-height:23px;letter-spacing:.45px;-webkit-text-stroke:.8px;white-space:nowrap}
.lt{display:flex}.lt .lab{width:193px}.lt ui-select{width:195px;font-size:18px;color:#000;border-color:#aaa;padding-right:6px}
.ck{display:flex;height:40px}.ck div{display:flex;flex:none;width:386px;gap:8px}.ck ui-check{margin-top:8px}.ck div+div{gap:5px;width:340px}
.pw{display:flex}.pw .lab{width:157px;line-height:24px}.pw ui-select{width:214px;color:#000}
</style><header>Metadata for Martavan</header><ui-rule></ui-rule>
<div class="b1"><ui-button kind="link"><ui-icon slot="icon" name="link"></ui-icon>Permalink</ui-button></div>
<div class="b2"><ui-button kind="full"><ui-icon slot="icon" name="expand"></ui-icon>Show fullscreen</ui-button><ui-button kind="add"><ui-icon slot="icon" name="pin"></ui-icon>Add marker</ui-button></div>
<div class="view"><geo-map></geo-map><doc-view></doc-view></div>
<div class="form"><div class="col">
<form-row label="id" value="w142 w148 w151"></form-row><form-row label="latitude" value="13.5392"></form-row><form-row label="country" bird></form-row><form-row label="gazetteer" value="geonames"></form-row><form-row label="dbpedia"></form-row><form-row label="type" value="SEA"></form-row>
<div class="lt"><span class="lab">location type</span><ui-select>real, existing &lt; 1800</ui-select></div></div>
<div class="col">
<form-row label="name" value="Bay of Bengal" bird></form-row><form-row label="longitude" value="87.6709"></form-row><form-row label="population" value="0"></form-row><form-row label="gazref" value="1281789" linked></form-row><form-row label="dbpedia id" linked></form-row><form-row label="remarks"></form-row>
<div class="ck"><div><ui-check></ui-check><span class="lab">is main location</span></div><div><ui-check checked></ui-check><span class="lab">near main location</span></div></div>
<div class="pw"><span class="lab">position wrt</span><ui-select></ui-select></div></div></div>`);

define('geo-app', `<style>
:host{display:flex;flex-direction:column;width:2784px;height:1458px;position:relative;overflow:hidden}
h1{margin:0;height:80px;line-height:81px;font-size:32px;font-weight:400;padding-left:16px}
main{display:flex;gap:14px;height:1302px;padding-left:2px}
footer{position:absolute;left:0;bottom:0;width:416px;height:22px;overflow:hidden;background:#eee;font-size:18px;line-height:24px;display:flex;justify-content:flex-end;white-space:pre}
.shade{position:absolute;left:440px;right:500px;top:1458px;height:40px;box-shadow:0 0 50px 8px rgba(0,0,0,.17)}
</style><nav-bar></nav-bar><h1>Extracts</h1><main><filter-panel></filter-panel><extract-panel></extract-panel><meta-panel></meta-panel></main>
<footer><span>GeoViz 0.0.7 - Developed by: <a>De Taalmonsters</a> 2016</span></footer><div class="shade"></div>`);
</script>
</body>
</html>
